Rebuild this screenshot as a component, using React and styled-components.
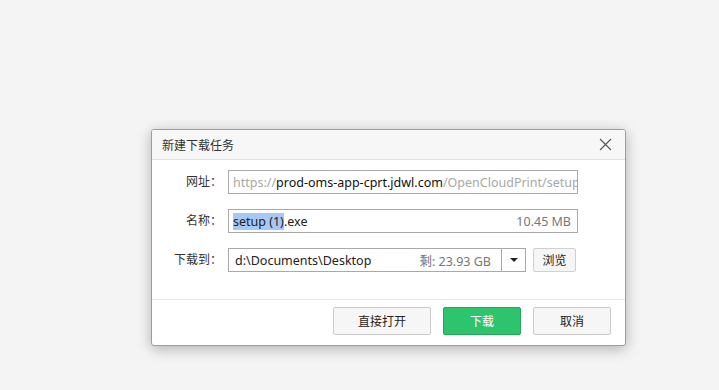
import React from 'react'
import styled, { createGlobalStyle } from 'styled-components'

const GlobalStyle = createGlobalStyle`
  html, body {
    margin: 0;
    background: #f4f4f4;
  }
  body {
    font-family: "Noto Sans", "Noto Sans CJK SC", sans-serif;
    color: #333;
  }
`

const Page = styled.div`
  width: 719px;
  height: 390px;
  padding: 129px 0 0 151px;
  box-sizing: border-box;
  overflow: hidden;
`

const Dialog = styled.div`
  width: 475px;
  box-sizing: border-box;
  background: #fff;
  border: 1px solid #9d9d9d;
  border-radius: 3px;
  box-shadow: 0 3px 14px rgba(0, 0, 0, 0.28);
  overflow: hidden;
`

const Header = styled.div`
  height: 29px;
  display: flex;
  align-items: center;
  justify-content: space-between;
  padding: 0 12px 0 10px;
  background: #f7f7f7;
  border-bottom: 1px solid #e2e2e2;
  font-size: 12px;
  color: #333;
`

const Close = styled.button`
  width: 16px;
  height: 16px;
  padding: 0;
  border: 0;
  background: none;
  display: flex;
  align-items: center;
  justify-content: center;
`

const Body = styled.div`
  display: grid;
  grid-template-columns: 70px 350px;
  grid-auto-rows: 24px;
  column-gap: 6px;
  row-gap: 15px;
  padding: 10px 0 27px;
  border-bottom: 1px solid #e6e6e6;
`

const Label = styled.div`
  font-size: 12px;
  text-align: right;
  line-height: 24px;
  color: #333;
`

const Field = styled.div`
  display: flex;
  align-items: center;
  height: 24px;
  box-sizing: border-box;
  border: 1px solid #a9a9a9;
  padding: 0 6px 0 ${p => p.$pl || 4}px;
  font-size: 12.5px;
  white-space: nowrap;
  overflow: hidden;
  color: #222;
`

const Muted = styled.span`
  color: #a8a8a8;
`

const Dark = styled.span`
  color: #111;
`

const Selected = styled.span`
  background: #a6c8f2;
`

const Size = styled.span`
  margin-left: auto;
  color: #777;
`

const PathRow = styled.div`
  display: flex;
  gap: 7px;
`

const Select = styled.div`
  width: 298px;
  height: 24px;
  box-sizing: border-box;
  border: 1px solid #a9a9a9;
  display: flex;
  font-size: 12.5px;
`

const SelectValue = styled.div`
  flex: 1;
  display: flex;
  align-items: center;
  padding: 0 10px 0 6px;
  color: #222;
`

const Arrow = styled.div`
  width: 23px;
  border-left: 1px solid #a9a9a9;
  display: flex;
  align-items: center;
  justify-content: center;
  &::after {
    content: '';
    border-left: 4px solid transparent;
    border-right: 4px solid transparent;
    border-top: 4px solid #222;
  }
`

const SmallButton = styled.button`
  width: 43px;
  height: 24px;
  padding: 0;
  box-sizing: border-box;
  border: 1px solid #d0d0d0;
  border-radius: 2px;
  background: #f6f6f6;
  font-family: inherit;
  font-size: 12px;
  color: #222;
`

const Footer = styled.div`
  display: flex;
  justify-content: flex-end;
  gap: 12px;
  padding: 7px 14px 10px 0;
`

const Button = styled.button`
  width: ${p => p.$w || 78}px;
  height: 28px;
  box-sizing: border-box;
  padding: 0;
  border-radius: 2px;
  border: 1px solid ${p => (p.$primary ? '#22a85a' : '#cacaca')};
  background: ${p => (p.$primary ? '#2ec46e' : '#f6f6f6')};
  color: ${p => (p.$primary ? '#fff' : '#222')};
  font-family: inherit;
  font-size: 12px;
`

const CloseIcon = () => (
  <svg width="13" height="13" viewBox="0 0 13 13">
    <path d="M1 1 L12 12 M12 1 L1 12" stroke="#555" strokeWidth="1.1" fill="none" />
  </svg>
)

export default function App() {
  return (
    <Page>
      <GlobalStyle />
      <Dialog>
        <Header>
          <span>新建下载任务</span>
          <Close><CloseIcon /></Close>
        </Header>
        <Body>
          <Label>网址：</Label>
          <Field>
            <Muted>https://</Muted>
            <Dark>prod-oms-app-cprt.jdwl.com</Dark>
            <Muted>/OpenCloudPrint/setup (1).exe</Muted>
          </Field>
          <Label>名称：</Label>
          <Field>
            <Selected>setup (1)</Selected>.exe
            <Size>10.45 MB</Size>
          </Field>
          <Label>下载到：</Label>
          <PathRow>
            <Select>
              <SelectValue>
                d:\Documents\Desktop
                <Size>剩: 23.93 GB</Size>
              </SelectValue>
              <Arrow />
            </Select>
            <SmallButton>浏览</SmallButton>
          </PathRow>
        </Body>
        <Footer>
          <Button $w={98}>直接打开</Button>
          <Button $primary>下载</Button>
          <Button>取消</Button>
        </Footer>
      </Dialog>
    </Page>
  )
}
